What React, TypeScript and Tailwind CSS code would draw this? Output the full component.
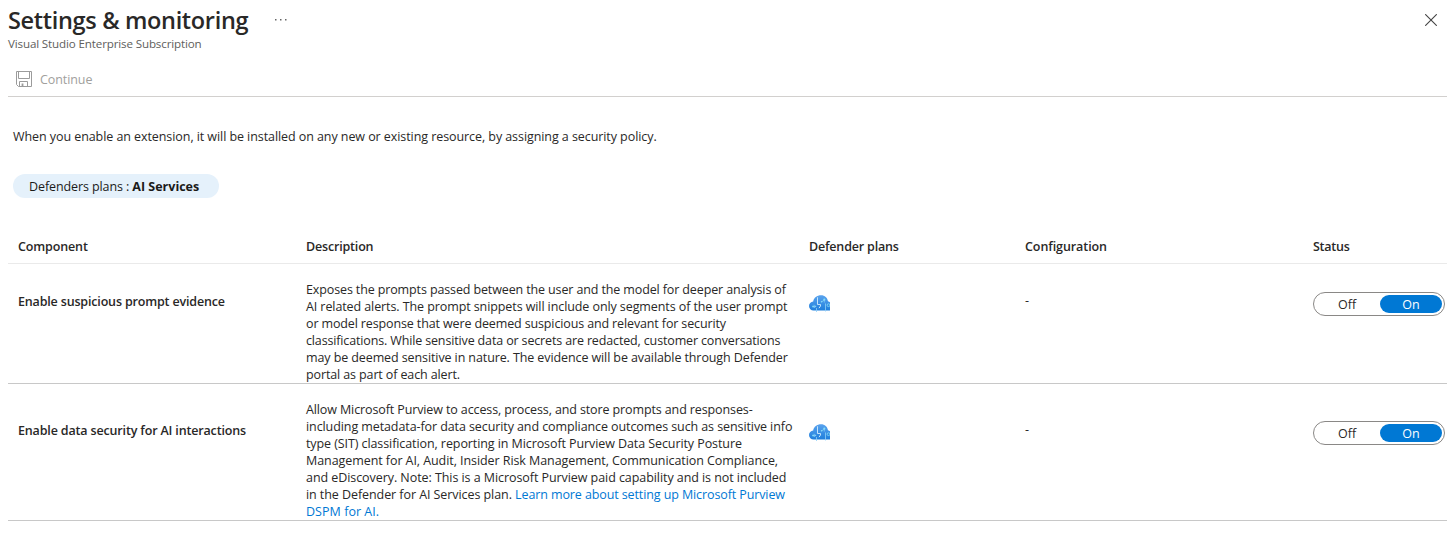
import type { ReactNode } from 'react';

function SaveIcon() {
  return (
    <svg width="16" height="16" viewBox="0 0 16 16" fill="none" stroke="#9b9b9b" className="shrink-0">
      <path d="M.5.5h15v15H2.500L.5 13.500z" />
      <path d="M2.500.5v7h11v-7" />
      <path d="M3.500 15.500v-5h8v5" />
      <path d="M6.500 12.500v3" strokeWidth="1.800" />
    </svg>
  );
}

function CloseIcon() {
  return (
    <svg width="12" height="12" viewBox="0 0 12 12" fill="none" stroke="#444" strokeWidth="1.1">
      <path d="M.2.2l11.6 11.6M11.8.2L.2 11.8" />
    </svg>
  );
}

function CloudIcon() {
  return (
    <svg width="21" height="17" viewBox="0 0 21 17" fill="none">
      <defs>
        <linearGradient id="cloud" x1="0" y1="0" x2="0" y2="1">
          <stop offset="0" stopColor="#5aa3ee" />
          <stop offset="1" stopColor="#1f7fdc" />
        </linearGradient>
      </defs>
      <path
        d="M4.600 15.500C2 15.500 0 13.600 0 11 0 8.500 1.800 6.700 4.200 6.400 4.800 2.700 8 .2 12 .2c3.900 0 6.300 2.500 7 6 .8.200 1.500.6 2 1.100v8.200z"
        fill="url(#cloud)"
      />
      <path d="M8.500 2.300v7.200h3v1.500l-1.500 2.200" stroke="#d3ecfc" strokeWidth=".9" />
      <path d="M7.500 13v4M16.500 8.500v8" stroke="#8fd0f8" strokeWidth=".8" />
      <path d="M3.500 11.500h3.500M5.200 9.800l1.500 1.700-1.500 1.500" stroke="#8fd3fa" strokeWidth=".8" />
      <path d="M12.800 6.800l2.500-1.800v2.500" stroke="#7cc6f6" strokeWidth=".8" />
      <circle cx="15.300" cy="4.700" r="1.100" fill="#86dcf5" />
      <circle cx="12.600" cy="6.800" r=".8" fill="#86dcf5" />
      <circle cx="4.200" cy="11.500" r=".9" fill="#86dcf5" />
      <circle cx="19.500" cy="10.200" r="1.400" stroke="#86dcf5" strokeWidth=".8" />
    </svg>
  );
}

function Toggle() {
  return (
    <div className="flex h-6 w-[132px] rounded-full border border-[#8a8886] p-[2px] text-[12.5px] leading-[19px]">
      <span className="w-16 pr-[2px] text-center">Off</span>
      <span className="h-[18px] w-[62px] rounded-full bg-[#0078d4] text-center text-white">On</span>
    </div>
  );
}

const columns = 'grid grid-cols-[298px_503px_216px_288px_134px]';

function Row({ name, tracking, offset, children }: { name: string; tracking: string; offset: string; children: ReactNode }) {
  return (
    <div className={`${columns} border-b border-[#c8c8c8]`}>
      <div className={`${offset} pl-[10px] font-semibold`}>
        <p className={`pt-px ${tracking}`}>{name}</p>
      </div>
      <div className="pt-[17px] whitespace-nowrap">{children}</div>
      <div className={offset}>
        <div className="pt-[3px]">
          <CloudIcon />
        </div>
      </div>
      <div className={offset}>-</div>
      <div className={offset}>
        <Toggle />
      </div>
    </div>
  );
}

export default function App() {
  return (
    <main className="h-[535px] bg-white pr-2 pl-2 font-['Open_Sans','Noto_Sans',sans-serif] text-[12.5px] leading-[17px] text-[#292827]">
      <header className="flex h-[52px] justify-between">
        <div>
          <div className="flex items-center">
            <h1 className="h-9 pt-1 text-[23.5px] leading-8 font-semibold tracking-[-0.33px]">Settings &amp; monitoring</h1>
            <svg width="12" height="2" viewBox="0 0 12 2" className="mt-1 ml-[27px] fill-[#666]">
              <path d="M0 0h1.500v1.500H0zM5 0h1.500v1.500H5zM10 0h1.500v1.500H10z" />
            </svg>
          </div>
          <p className="text-[11.6px] leading-4 tracking-[-0.14px] text-[#605e5c]">Visual Studio Enterprise Subscription</p>
        </div>
        <div className="pt-[14px] pr-[10px]">
          <CloseIcon />
        </div>
      </header>

      <div className="flex h-[45px] items-center gap-2 border-b border-[#d2d0ce] pt-[9px] pl-2 text-[#a19f9d]">
        <SaveIcon />
        <span className="pt-px tracking-[-0.08px]">Continue</span>
      </div>

      <p className="pt-[31px] pl-[5px] tracking-[-0.072px]">
        When you enable an extension, it will be installed on any new or existing resource, by assigning a security policy.
      </p>
      <div className="mt-[29px] ml-[5px] flex h-6 w-[206px] items-center rounded-full bg-[#e5f1fb] pl-4 whitespace-pre text-[#1b1a19]">
        <span className="tracking-[-0.1px]">Defenders plans : </span>
        <span className="font-bold">AI Services</span>
      </div>

      <div className={`${columns} mt-8 h-[34px] border-b border-[#eaeaea] pt-2 font-semibold`}>
        <span className="pl-[10px] tracking-[-0.13px]">Component</span>
        <span className="tracking-[-0.18px]">Description</span>
        <span className="tracking-[-0.18px]">Defender plans</span>
        <span className="tracking-[-0.08px]">Configuration</span>
        <span className="tracking-[-0.25px]">Status</span>
      </div>

      <Row name="Enable suspicious prompt evidence" tracking="tracking-[-0.165px]" offset="pt-7">
        <p className="tracking-[-0.125px]">Exposes the prompts passed between the user and the model for deeper analysis of</p>
        <p className="tracking-[-0.09px]">AI related alerts. The prompt snippets will include only segments of the user prompt</p>
        <p className="tracking-[-0.13px]">or model response that were deemed suspicious and relevant for security</p>
        <p className="tracking-[-0.145px]">classifications. While sensitive data or secrets are redacted, customer conversations</p>
        <p className="tracking-[-0.1px]">may be deemed sensitive in nature. The evidence will be available through Defender</p>
        <p className="tracking-[-0.12px]">portal as part of each alert.</p>
      </Row>

      <Row name="Enable data security for AI interactions" tracking="tracking-[-0.155px]" offset="pt-[37px]">
        <p className="tracking-[-0.115px]">Allow Microsoft Purview to access, process, and store prompts and responses-</p>
        <p className="tracking-[-0.09px]">including metadata-for data security and compliance outcomes such as sensitive info</p>
        <p className="tracking-[-0.087px]">type (SIT) classification, reporting in Microsoft Purview Data Security Posture</p>
        <p className="tracking-[-0.07px]">Management for AI, Audit, Insider Risk Management, Communication Compliance,</p>
        <p className="tracking-[-0.065px]">and eDiscovery. Note: This is a Microsoft Purview paid capability and is not included</p>
        <p className="tracking-[-0.07px]">
          in the Defender for AI Services plan.{' '}
          <a className="tracking-[-0.105px] text-[#0078d4]">Learn more about setting up Microsoft Purview</a>
        </p>
        <p className="tracking-[0.04px] text-[#0078d4]">DSPM for AI.</p>
      </Row>
    </main>
  );
}
